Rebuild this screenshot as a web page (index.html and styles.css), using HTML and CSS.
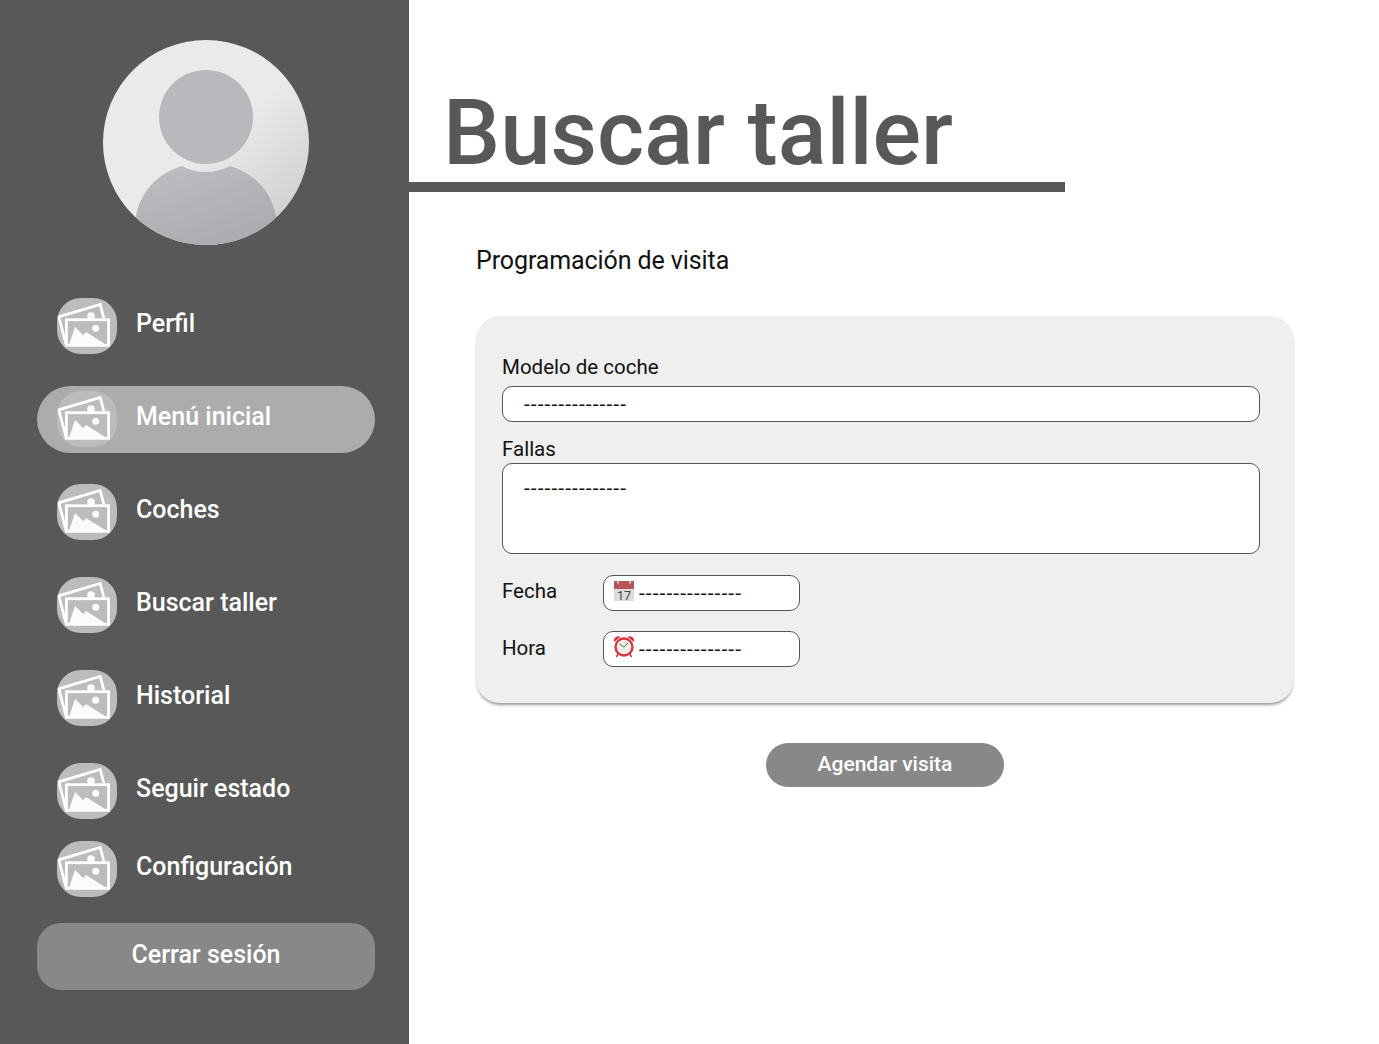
FILE: index.html
```html
<!DOCTYPE html>
<html lang="es">
<head>
<meta charset="UTF-8">
<meta name="viewport" content="width=device-width, initial-scale=1.0">
<title>Buscar taller</title>
<link rel="stylesheet" href="styles.css">
</head>
<body>

<svg class="sprites" width="0" height="0">
    <symbol id="pic" viewBox="0 0 60 56">
        <path d="M9.2 47 L1.8 18.8 L43.2 6.4 L46.8 20" fill="none" stroke="#fff" stroke-width="2.8" stroke-linejoin="miter"/>
        <circle cx="34" cy="18" r="3.8" fill="#fbfbfb"/>
        <rect x="9.4" y="21.7" width="42.2" height="25.6" fill="#bcbcbc" stroke="#fff" stroke-width="2.8"/>
        <path d="M12.3 46 L18 29 L26.3 37.3 L29 34 L48 46 Z" fill="#fbfbfb"/>
        <circle cx="38.7" cy="30.3" r="3.5" fill="#fbfbfb"/>
    </symbol>
</svg>

<div class="layout">
    <aside class="sidebar">
        <svg class="avatar" width="206" height="205" viewBox="0 0 206 205">
            <defs>
                <linearGradient id="bg" x1="0.25" y1="0.2" x2="0.95" y2="0.95">
                    <stop offset="0.4" stop-color="#e9eaec"/>
                    <stop offset="1" stop-color="#cbcccd"/>
                </linearGradient>
                <linearGradient id="fg" x1="0.2" y1="0" x2="0.8" y2="1">
                    <stop offset="0" stop-color="#bcbdc0"/>
                    <stop offset="1" stop-color="#a9aaad"/>
                </linearGradient>
                <clipPath id="round"><ellipse cx="103" cy="102.5" rx="103" ry="102.5"/></clipPath>
            </defs>
            <ellipse cx="103" cy="102.5" rx="103" ry="102.5" fill="url(#bg)"/>
            <circle cx="103" cy="77" r="47" fill="#b8b9bc"/>
            <path clip-path="url(#round)" d="M33 206 L33 176 C38 150 56 133 79 126 C94 134 112 134 127 126 C150 133 168 150 173 176 L173 206 Z" fill="url(#fg)"/>
        </svg>

        <nav class="menu">
            <a class="menu-item"><svg class="pic"><use href="#pic"/></svg><span>Perfil</span></a>
            <a class="menu-item active"><svg class="pic"><use href="#pic"/></svg><span>Menú inicial</span></a>
            <a class="menu-item"><svg class="pic"><use href="#pic"/></svg><span>Coches</span></a>
            <a class="menu-item"><svg class="pic"><use href="#pic"/></svg><span>Buscar taller</span></a>
            <a class="menu-item"><svg class="pic"><use href="#pic"/></svg><span>Historial</span></a>
            <a class="menu-item tight"><svg class="pic"><use href="#pic"/></svg><span>Seguir estado</span></a>
            <a class="menu-item last"><svg class="pic"><use href="#pic"/></svg><span>Configuración</span></a>
        </nav>
        <a class="logout">Cerrar sesión</a>
    </aside>

    <main class="content">
        <header class="title-bar">
            <h1>Buscar taller</h1>
        </header>
        <h2>Programación de visita</h2>

        <form class="card">
            <label class="field-label first">Modelo de coche</label>
            <input class="box" type="text" value="---------------" readonly>
            <label class="field-label">Fallas</label>
            <textarea class="box area" readonly>---------------</textarea>

            <div class="row date-row">
                <label>Fecha</label>
                <div class="box small">
                    <svg class="glyph" width="22" height="22" viewBox="0 0 22 22">
                        <rect x="1" y="1" width="20" height="20" fill="#dcdcdc"/>
                        <rect x="1" y="1" width="20" height="8" fill="#b4575a"/>
                        <path d="M5 0.5 V3.5 M17 0.5 V3.5" stroke="#eee" stroke-width="1.4"/>
                        <text x="11" y="20" text-anchor="middle" class="cal-num">17</text>
                    </svg>
                    <span class="dashes">---------------</span>
                </div>
            </div>
            <div class="row">
                <label>Hora</label>
                <div class="box small">
                    <svg class="glyph" width="22" height="22" viewBox="0 0 22 22">
                        <path d="M1 6 A4.4 4.4 0 0 1 7.5 1 Z M21 6 A4.4 4.4 0 0 0 14.5 1 Z" fill="#d8343f"/>
                        <path d="M5 18 L3.5 21 M17 18 L18.5 21" stroke="#b9282f" stroke-width="1.5"/>
                        <circle cx="11" cy="11" r="8.5" fill="#f1ece8" stroke="#d8343f" stroke-width="2.4"/>
                        <path d="M11 11 L6.5 8 M11 11 L15 7" stroke="#666" stroke-width="1"/>
                    </svg>
                    <span class="dashes">---------------</span>
                </div>
            </div>
        </form>

        <div class="actions">
            <button type="button" class="submit">Agendar visita</button>
        </div>
    </main>
</div>

</body>
</html>
```

FILE: styles.css
```css
* {
    box-sizing: border-box;
}
body {
    margin: 0;
    font-family: Roboto, Arial, sans-serif;
    color: #111;
    background: #fff;
}
.sprites {
    display: block;
    height: 0;
}
.layout {
    display: flex;
    height: 1044px;
    overflow: hidden;
}

/* sidebar */
.sidebar {
    width: 409px;
    flex: none;
    background: #585858;
    padding: 40px 34px 0 37px;
}
.avatar {
    display: block;
    margin: 0 0 0 66px;
}
.menu {
    margin-top: 47.5px;
}
.menu-item {
    display: flex;
    align-items: center;
    height: 67px;
    margin-bottom: 26px;
    padding-left: 20px;
    border-radius: 34px;
    color: #fff;
    font-size: 25px;
    font-weight: 500;
}
.menu-item.tight {
    margin-bottom: 11px;
}
.menu-item.last {
    margin-bottom: 20.5px;
}
.menu-item.active {
    background: #acacac;
}
.menu-item span {
    margin-top: -5px;
}
.pic {
    width: 60px;
    height: 56px;
    flex: none;
    margin-right: 19px;
    border-radius: 24px;
    background: #bcbcbc;
}
.logout {
    display: flex;
    align-items: center;
    justify-content: center;
    height: 67px;
    padding-bottom: 4px;
    border-radius: 24px;
    background: #888;
    color: #fff;
    font-size: 25px;
    font-weight: 500;
}

/* main area */
.content {
    flex: 1;
    padding-bottom: 20px;
}
.title-bar {
    width: 656px;
    height: 192px;
    padding: 78px 0 0 34px;
    border-bottom: 10px solid #585858;
}
h1 {
    margin: 0;
    font-size: 90.5px;
    line-height: 110px;
    font-weight: 500;
    color: #585858;
}
h2 {
    margin: 52px 0 0 67px;
    font-size: 25px;
    line-height: 34px;
    font-weight: 400;
    letter-spacing: -0.1px;
}
.card {
    width: 818px;
    height: 387px;
    margin: 38px 0 0 67px;
    padding: 0 34px 0 26px;
    border-radius: 24px;
    background: #efefef;
    box-shadow: 0 3px 3px -1px rgba(0, 0, 0, 0.4);
}
.field-label {
    display: block;
    height: 41px;
    padding-top: 12px;
    font-size: 20.5px;
    line-height: 30px;
}
.field-label.first {
    height: 70px;
    padding-top: 36px;
}
.box {
    display: block;
    width: 100%;
    height: 36px;
    border: 1px solid #555;
    border-radius: 10px;
    background: #fff;
    padding: 0 21px;
    font-family: inherit;
    font-size: 21px;
    letter-spacing: 1.07px;
    color: #111;
    outline: none;
    resize: none;
}
.area {
    height: 91px;
    padding-top: 10px;
    line-height: 28px;
}
.row {
    display: flex;
    align-items: center;
    margin-top: 20px;
    font-size: 20.5px;
}
.date-row {
    margin-top: 21px;
}
.row label {
    width: 101px;
    margin-top: -3px;
}
.date-row label {
    margin-top: -5px;
}
.box.small {
    display: flex;
    align-items: center;
    width: 197px;
    padding: 0 9px;
}
.glyph {
    flex: none;
    margin: 0 4px 4px 0;
}
.cal-num {
    font-size: 12.5px;
    letter-spacing: 0;
    fill: #444;
}

.actions {
    width: 818px;
    margin: 40px 0 0 67px;
    display: flex;
    justify-content: center;
}
.submit {
    width: 238px;
    height: 44px;
    padding-bottom: 3px;
    border: none;
    border-radius: 22px;
    background: #888;
    color: #fff;
    font-family: inherit;
    font-size: 21px;
    font-weight: 500;
}
```
